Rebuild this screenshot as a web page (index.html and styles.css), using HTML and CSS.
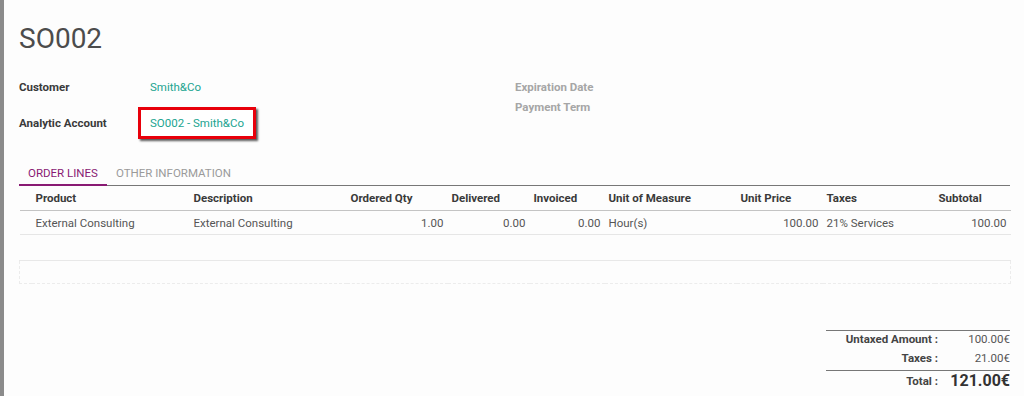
FILE: index.html
```html
<!doctype html>
<html lang="en">
<head>
  <meta charset="utf-8" />
  <title>SO002</title>
  <link rel="stylesheet" href="styles.css">
</head>
<body>
<div class="sheet">
  <h1 class="title">SO002</h1>

  <div class="groups">
    <div class="group group-left">
      <div class="field">
        <span class="label">Customer</span>
        <span class="value link">Smith&amp;Co</span>
      </div>
      <div class="field field-boxed">
        <span class="label">Analytic Account</span>
        <span class="value"><span class="highlight link">SO002 - Smith&amp;Co</span></span>
      </div>
    </div>
    <div class="group group-right">
      <div class="field"><span class="label muted">Expiration Date</span></div>
      <div class="field"><span class="label muted">Payment Term</span></div>
    </div>
  </div>

  <ul class="tabs">
    <li class="tab active">ORDER LINES</li>
    <li class="tab">OTHER INFORMATION</li>
  </ul>

  <table class="lines">
    <colgroup>
      <col style="width:12px"><col style="width:158px"><col style="width:157px"><col style="width:101px"><col style="width:82px"><col style="width:75px"><col style="width:132px"><col style="width:86px"><col style="width:112px"><col style="width:76px">
    </colgroup>
    <thead>
      <tr>
        <th></th><th>Product</th><th>Description</th><th>Ordered Qty</th><th>Delivered</th><th>Invoiced</th><th>Unit of Measure</th><th>Unit Price</th><th>Taxes</th><th>Subtotal</th>
      </tr>
    </thead>
    <tbody>
      <tr class="line">
        <td></td><td>External Consulting</td><td>External Consulting</td><td class="num">1.00</td><td class="num">0.00</td><td class="num">0.00</td><td>Hour(s)</td><td class="num">100.00</td><td>21% Services</td><td class="num">100.00</td>
      </tr>
      <tr class="empty"><td colspan="10"></td></tr>
    </tbody>
    <tfoot>
      <tr><td colspan="10"></td></tr>
    </tfoot>
  </table>

  <div class="totals-wrap">
    <table class="totals">
      <tr class="t-first"><td class="t-label">Untaxed Amount :</td><td class="t-val">100.00€</td></tr>
      <tr class="t-second"><td class="t-label">Taxes :</td><td class="t-val">21.00€</td></tr>
      <tr class="t-total"><td class="t-label">Total :</td><td class="t-val">121.00€</td></tr>
    </table>
  </div>
</div>
</body>
</html>
```

FILE: styles.css
```css
body{margin:0;background:#fdfdfd;font-family:Roboto,"Liberation Sans",Arial,sans-serif;font-size:11.5px;color:#4c4c4c;}
.sheet{border-left:4px solid #8b8b8b;min-height:396px;box-sizing:border-box;padding:22px 14px 0 15px;}
.title{margin:0;font-size:28px;line-height:34px;font-weight:400;color:#4c4c4c;}

.groups{display:flex;margin-top:21px;}
.group-left{width:496px;}
.field{display:flex;align-items:center;line-height:20px;}
.field-boxed{margin-top:10px;}
.label{font-weight:bold;color:#3a3a3a;width:131px;}
.label.muted{color:#a6a6a6;width:auto;}
.link{color:#21a490;}
.highlight{display:inline-block;margin-left:-12px;padding:3px 9px;line-height:20px;border:3px solid #e8000b;background:#fff;box-shadow:2px 2px 2px rgba(0,0,0,0.65);}

.tabs{display:flex;list-style:none;margin:21px 0 0;padding:0;border-bottom:1px solid #777;}
.tab{padding:5px 9px 3px;line-height:16px;color:#9a9a9a;border-bottom:2px solid transparent;margin-bottom:-1px;}
.tab.active{color:#891a73;border-bottom-color:#891a73;}

.lines{width:991px;table-layout:fixed;border-collapse:collapse;}
.lines th{text-align:left;font-weight:bold;color:#3a3a3a;padding:0 4px;height:24px;border-bottom:1px solid #c4c4c4;}
.lines td{padding:0 4px;color:#555;white-space:nowrap;}
.lines .num{text-align:right;}
.line td{height:23px;border-bottom:1px solid #e6e6e6;}
.empty td{height:25px;border-bottom:1px solid #e8e8e8;}
.lines tfoot td{height:22px;border:1px dashed #ececec;border-top:none;}

.totals-wrap{display:flex;justify-content:flex-end;margin-top:46px;}
.totals{width:184px;border-collapse:collapse;border-top:1px solid #777;}
.totals td{padding:0;line-height:16px;}
.t-label{text-align:right;font-weight:bold;color:#444;width:112px;padding-right:4px !important;}
.t-val{text-align:right;color:#555;}
.t-first td{padding-bottom:3px;}
.t-second td{padding-bottom:4px;line-height:16px;}
.t-total td{border-top:1px solid #777;line-height:20px;}
.t-total .t-val{font-size:16px;font-weight:bold;color:#333;}
```
